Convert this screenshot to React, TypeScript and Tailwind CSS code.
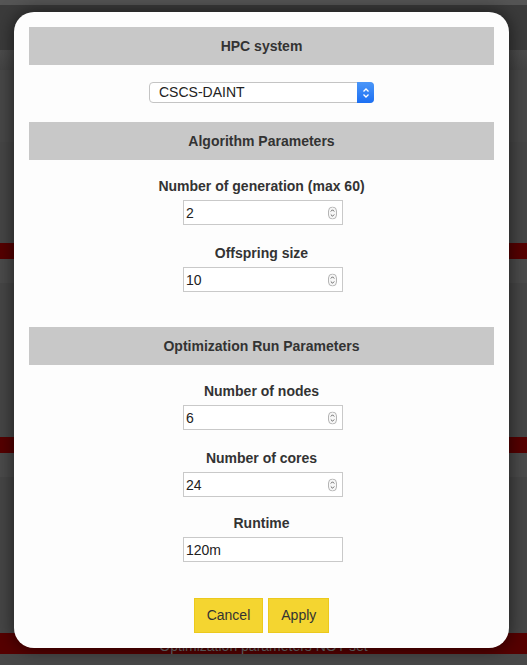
import React, { useState } from 'react';

const Spinner: React.FC = () => (
  <svg width="9" height="13" viewBox="0 0 9 13" className="absolute right-[6px] top-1/2 -translate-y-1/2 pointer-events-none">
    <rect x="0.5" y="0.5" width="8" height="12" rx="4" fill="#f7f7f7" stroke="#b5b5b5" />
    <path d="M2.8 5 L4.5 3.3 L6.2 5" fill="none" stroke="#555" strokeWidth="0.9" />
    <path d="M2.8 8 L4.5 9.7 L6.2 8" fill="none" stroke="#555" strokeWidth="0.9" />
  </svg>
);

const SectionHeader: React.FC<{ title: string; className?: string }> = ({ title, className }) => (
  <div className={`h-[38px] bg-[#c8c8c8] flex items-center justify-center text-[14px] font-bold text-[#333] ${className || ''}`}>
    {title}
  </div>
);

const Field: React.FC<{
  label: string;
  value: string;
  onChange: (v: string) => void;
  spinner?: boolean;
  className?: string;
}> = ({ label, value, onChange, spinner = true, className }) => (
  <div className={`flex flex-col items-center ${className || ''}`}>
    <div className="h-[20px] leading-[20px] text-[14px] font-bold text-[#333]">{label}</div>
    <div className="relative flex mt-[4px] ml-[3px]">
      <input
        className="block w-[160px] h-[25px] border border-[#c9c9c9] bg-white pl-[2px] pr-[18px] text-[14px] text-[#222] outline-none"
        value={value}
        onChange={e => onChange(e.target.value)}
      />
      {spinner && <Spinner />}
    </div>
  </div>
);

const App: React.FC = () => {
  const [hpc, setHpc] = useState('CSCS-DAINT');
  const [generations, setGenerations] = useState('2');
  const [offspring, setOffspring] = useState('10');
  const [nodes, setNodes] = useState('6');
  const [cores, setCores] = useState('24');
  const [runtime, setRuntime] = useState('120m');

  return (
    <div className="relative w-[527px] h-[665px] overflow-hidden bg-[#464646] font-['Liberation_Sans',Arial,sans-serif]">
      {/* page behind the dialog */}
      <div className="flex flex-col">
        <div className="h-[5px] bg-[#555555]" />
        <div className="h-[45px] bg-[#3b3b3b]" />
        <div className="h-[20px] bg-gradient-to-b from-[#4c4c4c] to-[#444444]" />
        <div className="h-[72px] bg-[#484848]" />
        <div className="h-[101px] bg-[#464646]" />
        <div className="h-[16px] bg-[#560000]" />
        <div className="h-[24px] bg-[#4b4b4b]" />
        <div className="h-[154px] bg-[#464646]" />
        <div className="h-[16px] bg-[#560000]" />
        <div className="h-[24px] bg-[#4b4b4b]" />
        <div className="h-[156px] bg-[#464646]" />
        <div className="h-[21px] bg-[#560000] flex items-end justify-center text-[14px] text-[#6e6e6e] leading-[16px]">
          Optimization parameters NOT set
        </div>
        <div className="h-[11px] bg-[#484848]" />
      </div>

      {/* dialog */}
      <div className="absolute left-[14px] top-[12px] w-[495px] h-[636px] rounded-[20px] bg-[#fdfdfd] shadow-[0_0_18px_rgba(0,0,0,0.6)] px-[15px] pt-[15px]">
        <SectionHeader title="HPC system" />
        <div className="mt-[17px] flex justify-center">
          <div className="relative flex">
            <select
              className="block appearance-none w-[225px] h-[21px] rounded-[4px] border border-[#c4c4c4] bg-white pl-[9px] py-0 text-[14px] leading-[19px] text-[#222] outline-none"
              value={hpc}
              onChange={e => setHpc(e.target.value)}
            >
              <option>CSCS-DAINT</option>
              <option>JUWELS</option>
              <option>NSG</option>
            </select>
            <div className="absolute right-0 top-0 h-[21px] w-[17px] rounded-r-[4px] bg-gradient-to-b from-[#4a96f8] to-[#1b6ff3] flex items-center justify-center pointer-events-none">
              <svg width="8" height="12" viewBox="0 0 8 12">
                <path d="M1.5 4.5 L4 2 L6.5 4.5" fill="none" stroke="#fff" strokeWidth="1.3" />
                <path d="M1.5 7.5 L4 10 L6.5 7.5" fill="none" stroke="#fff" strokeWidth="1.3" />
              </svg>
            </div>
          </div>
        </div>

        <SectionHeader title="Algorithm Parameters" className="mt-[19px]" />
        <Field className="mt-[16px]" label="Number of generation (max 60)" value={generations} onChange={setGenerations} />
        <Field className="mt-[18px]" label="Offspring size" value={offspring} onChange={setOffspring} />

        <SectionHeader title="Optimization Run Parameters" className="mt-[35px]" />
        <Field className="mt-[16px]" label="Number of nodes" value={nodes} onChange={setNodes} />
        <Field className="mt-[18px]" label="Number of cores" value={cores} onChange={setCores} />
        <Field className="mt-[16px]" label="Runtime" value={runtime} onChange={setRuntime} spinner={false} />

        <div className="mt-[36px] flex justify-center gap-[5px]">
          <button className="h-[35px] px-[12px] bg-[#f4d530] border border-[#ecc91c] text-[14px] text-[#333]">
            Cancel
          </button>
          <button className="h-[35px] px-[12px] bg-[#f4d530] border border-[#ecc91c] text-[14px] text-[#333]">
            Apply
          </button>
        </div>
      </div>
    </div>
  );
};

export default App;
